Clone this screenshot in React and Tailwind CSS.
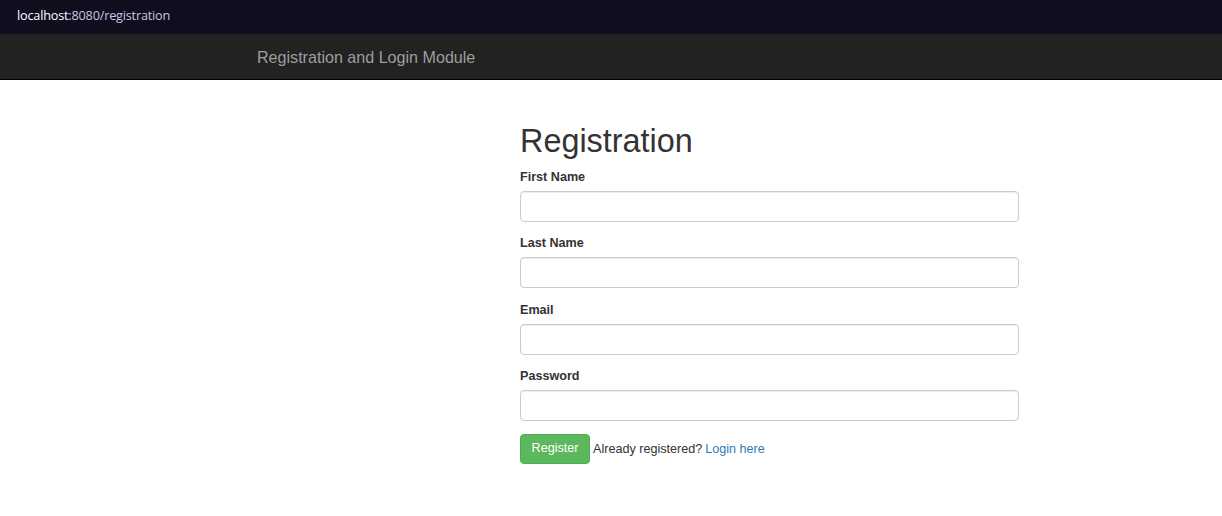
import React from "react";

// ── form field list
const FIELDS = [
  { id: "firstName", label: "First Name", type: "text" },
  { id: "lastName", label: "Last Name", type: "text" },
  { id: "email", label: "Email", type: "email" },
  { id: "password", label: "Password", type: "password" },
];

const sans = "font-['Liberation_Sans',Arial,sans-serif]";

export default function App() {
  return (
    <div className={`min-h-[516px] bg-white ${sans}`}>
      {/* address bar */}
      <div className="h-[34px] bg-[#100d1f] flex items-center pl-[17px] pb-[2px]">
        <span className="font-['Open_Sans',sans-serif] text-[12.7px] tracking-[-0.2px]">
          <span className="text-white">localhost</span>
          <span className="text-[#c9c4e0]">:8080/registration</span>
        </span>
      </div>

      {/* navbar */}
      <div className="h-[46px] bg-[#222222] border-b border-black flex items-center pl-[257px] pt-[1px]">
        <span className="text-[#9d9d9d] text-[16.1px]">Registration and Login Module</span>
      </div>

      {/* form */}
      <div className="ml-[520px] w-[499px] text-[#333333]">
        <h1 className="mt-[44px] mb-[8px] text-[32.4px] leading-[35.6px] font-normal">Registration</h1>
        {FIELDS.map(f => (
          <div key={f.id} className="mb-[12.5px] last:mb-[15px]">
            <label htmlFor={f.id} className="block text-[12.6px] leading-[18px] font-bold mb-[5px]">
              {f.label}
            </label>
            <input
              id={f.id}
              type={f.type}
              className="block w-full h-[31px] border border-[#cccccc] rounded-[4px] px-3 text-[12.6px] shadow-[inset_0_1px_1px_rgba(0,0,0,0.075)] outline-none"
            />
          </div>
        ))}
        <div className="flex items-center text-[12.6px]">
          <button className="h-[30px] w-[70px] pb-[1px] bg-[#5cb85c] border border-[#4cae4c] rounded-[4px] text-white text-[12.6px]">
            Register
          </button>
          <span className="ml-[3px] pt-[1px]">Already registered?</span>
          <a href="#" className="ml-[3px] pt-[1px] text-[#337ab7]">Login here</a>
        </div>
      </div>
    </div>
  );
}
